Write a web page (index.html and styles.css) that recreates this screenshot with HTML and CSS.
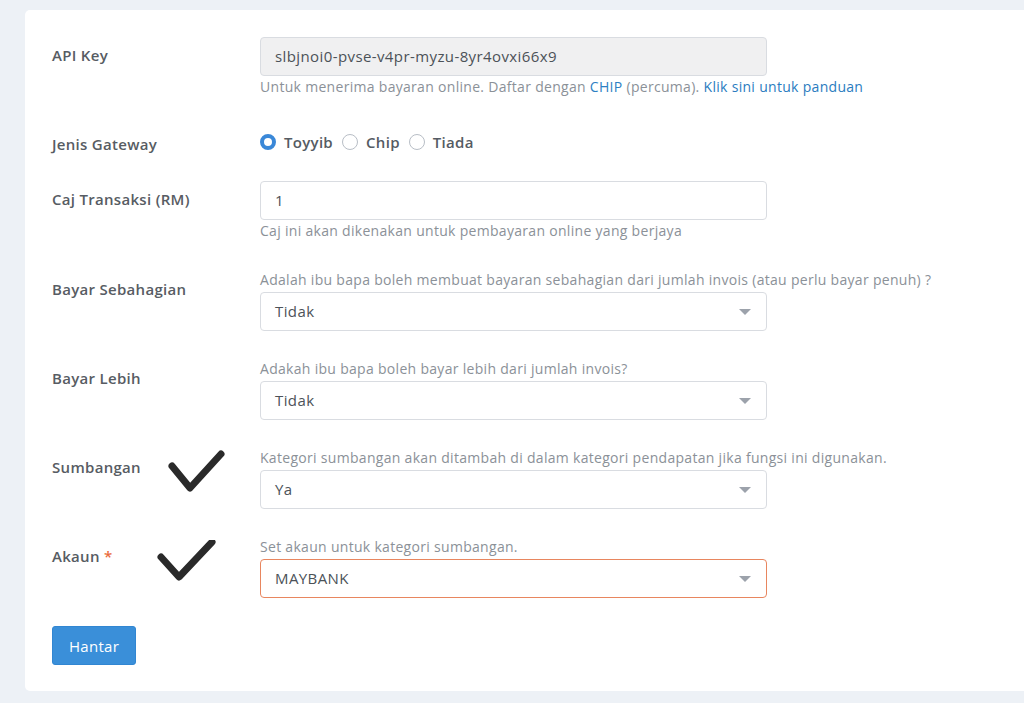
FILE: index.html
```html
<!DOCTYPE html>
<html lang="ms">

<head>
    <meta charset="utf-8">
    <meta name="viewport" content="width=device-width, initial-scale=1.0">
    <title>Tetapan Bayaran</title>
    <link rel="stylesheet" href="styles.css">
</head>

<body>
    <div class="card">
        <form class="form">
            <div class="row row-first">
                <label class="label">API Key</label>
                <div class="field">
                    <div class="input input-readonly">slbjnoi0-pvse-v4pr-myzu-8yr4ovxi66x9</div>
                    <div class="help help-below">Untuk menerima bayaran online. Daftar dengan <a href="#">CHIP</a> (percuma). <a href="#" class="link-strong">Klik sini untuk panduan</a></div>
                </div>
            </div>

            <div class="row row-radio">
                <label class="label">Jenis Gateway</label>
                <div class="field radios">
                    <span class="radio checked"></span><span class="radio-text">Toyyib</span>
                    <span class="radio"></span><span class="radio-text">Chip</span>
                    <span class="radio"></span><span class="radio-text">Tiada</span>
                </div>
            </div>

            <div class="row row-spaced">
                <label class="label">Caj Transaksi (RM)</label>
                <div class="field">
                    <div class="input">1</div>
                    <div class="help help-below">Caj ini akan dikenakan untuk pembayaran online yang berjaya</div>
                </div>
            </div>

            <div class="row">
                <label class="label">Bayar Sebahagian</label>
                <div class="field">
                    <div class="help help-above">Adalah ibu bapa boleh membuat bayaran sebahagian dari jumlah invois (atau perlu bayar penuh) ?</div>
                    <div class="input select">Tidak<span class="caret"></span></div>
                </div>
            </div>

            <div class="row">
                <label class="label">Bayar Lebih</label>
                <div class="field">
                    <div class="help help-above">Adakah ibu bapa boleh bayar lebih dari jumlah invois?</div>
                    <div class="input select">Tidak<span class="caret"></span></div>
                </div>
            </div>

            <div class="row">
                <label class="label">Sumbangan</label>
                <svg class="tick tick-1" width="70" height="50" viewBox="0 0 70 50">
                    <polyline points="6,16 24,38 55,4" />
                </svg>
                <div class="field">
                    <div class="help help-above">Kategori sumbangan akan ditambah di dalam kategori pendapatan jika fungsi ini digunakan.</div>
                    <div class="input select">Ya<span class="caret"></span></div>
                </div>
            </div>

            <div class="row">
                <label class="label">Akaun <span class="req">*</span></label>
                <svg class="tick tick-2" width="70" height="50" viewBox="0 0 70 50">
                    <polyline points="6,17 24,37 57,2" />
                </svg>
                <div class="field">
                    <div class="help help-above">Set akaun untuk kategori sumbangan.</div>
                    <div class="input select select-error">MAYBANK<span class="caret"></span></div>
                </div>
            </div>

            <button type="button" class="btn">Hantar</button>
        </form>
    </div>
</body>

</html>
```

FILE: styles.css
```css
body {
    margin: 0;
    background: #edf1f6;
    font-family: "Open Sans", "Liberation Sans", sans-serif;
    color: #555b63;
}

.card {
    margin: 10px 0 0 25px;
    background: #fff;
    border-radius: 5px 0 0 5px;
    padding: 27px 27px 26px;
}

.row {
    display: grid;
    grid-template-columns: 208px 507px;
    margin-bottom: 29px;
    position: relative;
}

.row-first {
    margin-bottom: 30px;
}

.row-radio {
    margin-bottom: 27px;
}

.row-spaced {
    margin-bottom: 31px;
}

.label {
    padding-top: 8px;
    line-height: 20px;
    font-size: 15px;
    font-weight: 600;
    letter-spacing: 0.3px;
    color: #575c63;
}

.req {
    color: #ea6b3c;
}

.input {
    height: 39px;
    box-sizing: border-box;
    border: 1px solid #d9dce1;
    border-radius: 4px;
    padding: 0 14px;
    line-height: 37px;
    font-size: 15px;
    letter-spacing: 0.4px;
    color: #4c5258;
    position: relative;
}

.input-readonly {
    background: #f0f0f1;
}

.select-error {
    border-color: #e8865f;
}

.caret {
    position: absolute;
    right: 15px;
    top: 16px;
    width: 0;
    height: 0;
    border-left: 6px solid transparent;
    border-right: 6px solid transparent;
    border-top: 6px solid #9ca2ab;
}

.help {
    font-size: 14px;
    line-height: 18px;
    letter-spacing: 0.3px;
    color: #8b9198;
    white-space: nowrap;
}

.help-below {
    margin-top: 2px;
}

.help-above {
    margin-bottom: 3px;
}

.help a {
    color: #2d7fc3;
    text-decoration: none;
}

.help a.link-strong {
    font-weight: 500;
    color: #2a7cc0;
}

.radios {
    display: flex;
    align-items: center;
    padding-top: 6px;
    height: 20px;
    font-size: 15px;
    font-weight: 600;
    letter-spacing: 0.3px;
    color: #555b63;
}

.radio {
    width: 16px;
    height: 16px;
    box-sizing: border-box;
    border: 1px solid #b8bec6;
    border-radius: 50%;
    margin-right: 8px;
}

.radio.checked {
    border: 4px solid #3a88d8;
}

.radio-text {
    margin-right: 9px;
}

.tick {
    position: absolute;
    fill: none;
    stroke: #2a2a2a;
    stroke-width: 7;
    stroke-linecap: round;
    stroke-linejoin: round;
}

.tick-1 {
    left: 114px;
    top: 1px;
}

.tick-2 {
    left: 103px;
    top: 2px;
}

.btn {
    width: 84px;
    height: 39px;
    border: 1px solid #3186d2;
    border-radius: 3px;
    background: #3a8fd9;
    color: #fff;
    font-family: inherit;
    font-size: 15px;
    font-weight: 500;
    letter-spacing: 0.3px;
    margin-top: -1px;
}
```
